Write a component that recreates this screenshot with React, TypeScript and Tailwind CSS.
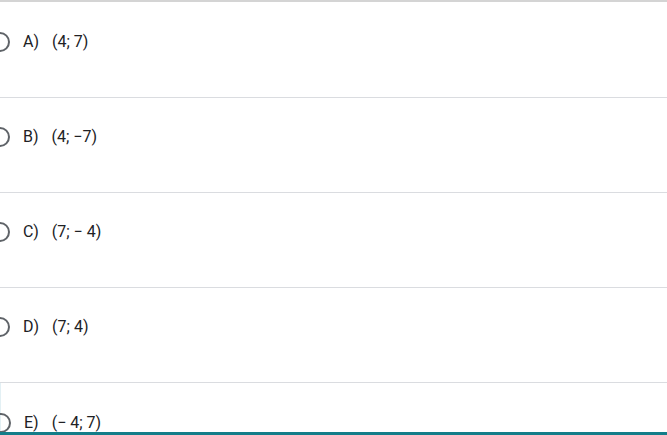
const options = [
  { label: "A)", value: "(4; 7)" },
  { label: "B)", value: "(4; −7)" },
  { label: "C)", value: "(7; − 4)" },
  { label: "D)", value: "(7; 4)" },
  { label: "E)", value: "(− 4; 7)" },
];

function Radio() {
  return <div className="-ml-[10px] h-5 w-5 shrink-0 rounded-full border-2 border-[#5f6368]" />;
}

export default function App() {
  return (
    <div
      className="h-[435px] w-[667px] overflow-hidden bg-white flex flex-col"
      style={{ fontFamily: "Roboto, 'Liberation Sans', sans-serif" }}
    >
      <div className="h-[2px] w-full shrink-0 bg-[#d4d4d4]" />
      {options.map((opt, i) => (
        <div
          key={opt.label}
          className={
            i === 0
              ? "h-[96px] shrink-0 border-b border-[#dadce0] pt-[30px]"
              : i < options.length - 1
              ? "h-[95px] shrink-0 border-b border-[#dadce0] pt-[29px]"
              : "h-[49px] shrink-0 pt-[30px] border-l border-[#e3f0f4]"
          }
        >
          <div className="flex h-5 items-center">
            <Radio />
            <span className="ml-[13px] text-[16px] leading-5 text-[#202124]">{opt.label}</span>
            <span className="ml-[13px] text-[16px] leading-5 text-[#202124]">{opt.value}</span>
          </div>
        </div>
      ))}
      <div className="h-[3px] w-full shrink-0 bg-[#137d89]" />
    </div>
  );
}
